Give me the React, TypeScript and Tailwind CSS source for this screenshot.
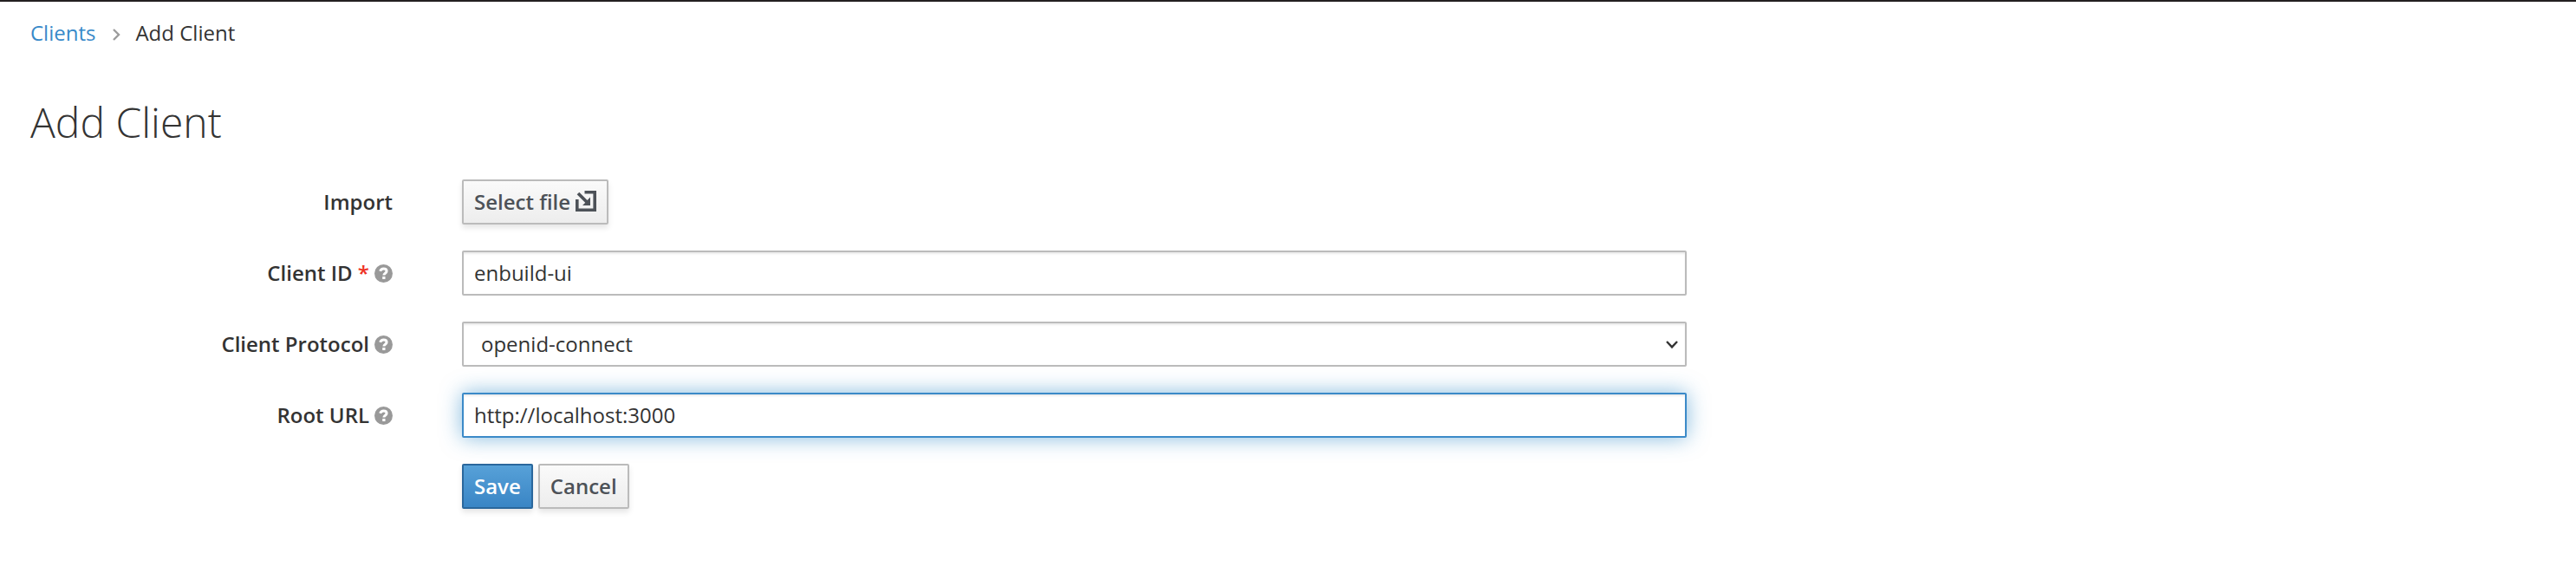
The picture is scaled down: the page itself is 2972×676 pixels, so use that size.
import type { ReactNode } from "react";

const buttonBase =
  "flex h-[52px] items-center rounded-[2px] border-2 px-[12px] text-[24px] font-semibold leading-[40px] shadow-[0_4px_6px_rgba(3,3,3,0.1)]";
const defaultButton = `${buttonBase} border-[#bbbbbb] bg-linear-to-b from-[#fafafa] to-[#ededed] text-[#4d5258]`;
const fieldBase =
  "flex h-[52px] w-[1413px] items-center rounded-[2px] border-2 bg-white text-[24px] leading-[40px] text-[#333333]";

function HelpIcon() {
  return (
    <svg viewBox="0 0 20 20" className="ml-[6px] h-[21px] w-[21px] shrink-0">
      <circle cx="10" cy="10" r="10" fill="#999999" />
      <path
        d="M6.3 7.4C7 5.6 8.2 4.7 10 4.7c2 0 3.4 1.1 3.4 2.7 0 2.3-3 2.2-3 4.4"
        fill="none"
        stroke="#ffffff"
        strokeWidth="2.9"
      />
      <rect x="8.8" y="13.3" width="3.1" height="2.9" fill="#ffffff" />
    </svg>
  );
}

function ImportIcon() {
  return (
    <svg viewBox="0 0 24 24" className="ml-[6px] h-[24px] w-[24px] -translate-y-[1px]" fill="none" stroke="#4d5258">
      <path d="M10.5 1.8h11.7v20.4H1.8V10" strokeWidth="3.6" />
      <path d="M3 3l10 10" strokeWidth="3.8" />
      <path d="M17 7.5V17H8l3.5-3.5 2-2.5z" fill="#4d5258" stroke="none" />
    </svg>
  );
}

function Row({ label, required, help, children }: { label: string; required?: boolean; help?: boolean; children: ReactNode }) {
  return (
    <div className="flex h-[52px]">
      <div className="mr-[80px] flex w-[418px] items-center justify-end text-[24px] font-semibold leading-[40px]">
        <label>
          {label}
          {required && <span className="text-[#ee3124]"> *</span>}
        </label>
        {help && <HelpIcon />}
      </div>
      {children}
    </div>
  );
}

export default function App() {
  return (
    <main className="h-[676px] w-full border-t-2 border-[#231f20] bg-white px-[35px] pt-[16px] font-['Open_Sans',sans-serif] text-[#333333]">
      <nav className="flex h-[40px] items-center text-[24px] leading-[40px]">
        <a href="#" className="text-[#3889c9]">
          Clients
        </a>
        <svg viewBox="0 0 9 14" className="mr-[17px] ml-[20px] h-[14px] w-[9px] translate-y-[2px]" fill="none" stroke="#9c9c9c" strokeWidth="2.4">
          <path d="M1 1l6 6-6 6" />
        </svg>
        <span>Add Client</span>
      </nav>
      <h1 className="mt-[57px] text-[48px] font-light leading-[52px]">Add Client</h1>
      <form className="mt-[40px] flex flex-col gap-[30px]">
        <Row label="Import">
          <button type="button" className={defaultButton}>
            Select file
            <ImportIcon />
          </button>
        </Row>
        <Row label="Client ID" required help>
          <div className={`${fieldBase} border-[#bbbbbb] px-[12px] shadow-[inset_0_2px_2px_rgba(3,3,3,0.075)]`}>enbuild-ui</div>
        </Row>
        <Row label="Client Protocol" help>
          <div className={`${fieldBase} justify-between border-[#bbbbbb] pr-[8px] pl-[20px] shadow-[inset_0_2px_2px_rgba(3,3,3,0.075)]`}>
            openid-connect
            <svg viewBox="0 0 14 9" className="h-[9px] w-[14px]" fill="none" stroke="#333333" strokeWidth="2.4">
              <path d="M1 1l6 6.4L13 1" />
            </svg>
          </div>
        </Row>
        <Row label="Root URL" help>
          <div className={`${fieldBase} border-[#3b8ac8] px-[12px] shadow-[inset_0_2px_2px_rgba(3,3,3,0.075),0_0_24px_rgba(50,140,200,0.6)]`}>
            http://localhost:3000
          </div>
        </Row>
        <div className="ml-[498px] flex gap-[6px]">
          <button type="button" className={`${buttonBase} border-[#2a679c] bg-linear-to-b from-[#57a1d8] to-[#3985c5] text-white`}>
            Save
          </button>
          <button type="button" className={defaultButton}>
            Cancel
          </button>
        </div>
      </form>
    </main>
  );
}
